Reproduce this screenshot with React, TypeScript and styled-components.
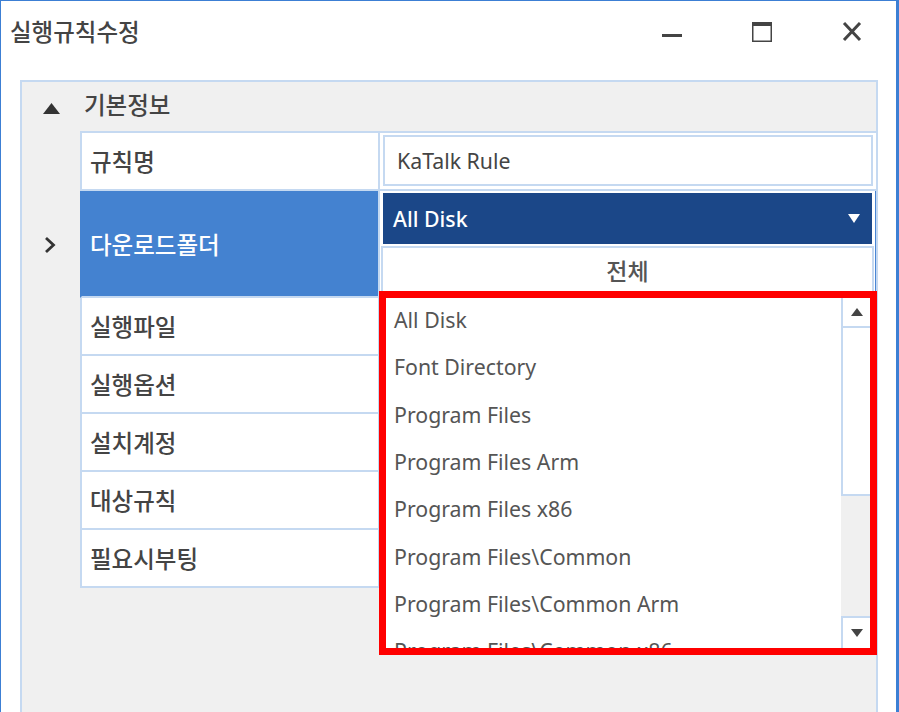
import React from "react";
import styled, { createGlobalStyle } from "styled-components";

const GlobalStyle = createGlobalStyle`
  html, body {
    margin: 0;
    padding: 0;
    background: #ffffff;
  }
  body {
    font-family: "Noto Sans", "Noto Sans CJK KR", sans-serif;
    color: #444444;
  }
`;

const LINE = "#c5d9f1";

const rows = [
  { label: "규칙명", kind: "text", value: "KaTalk Rule" },
  { label: "다운로드폴더", kind: "select", value: "All Disk" },
  { label: "실행파일" },
  { label: "실행옵션" },
  { label: "설치계정" },
  { label: "대상규칙" },
  { label: "필요시부팅" },
];

const folders = [
  "All Disk",
  "Font Directory",
  "Program Files",
  "Program Files Arm",
  "Program Files x86",
  "Program Files\\Common",
  "Program Files\\Common Arm",
  "Program Files\\Common x86",
];

const App: React.FC = () => {
  return (
    <>
      <GlobalStyle />
      <Window>
        <TitleBar>
          <Title>실행규칙수정</Title>
          <Controls>
            <CtrlButton>
              <svg width="20" height="20" viewBox="0 0 20 20">
                <rect x="0" y="12" width="20" height="3" fill="#444" />
              </svg>
            </CtrlButton>
            <CtrlButton>
              <svg width="20" height="20" viewBox="0 0 20 20">
                <rect x="0.75" y="0.75" width="18.5" height="18.5" fill="none" stroke="#444" strokeWidth="1.5" />
                <rect x="0" y="0" width="20" height="4" fill="#444" />
              </svg>
            </CtrlButton>
            <CtrlButton>
              <svg width="20" height="20" viewBox="0 0 20 20">
                <path d="M2 1 L18 18 M18 1 L2 18" stroke="#444" strokeWidth="3" />
              </svg>
            </CtrlButton>
          </Controls>
        </TitleBar>

        <Body>
          <Group>
            <GroupHeader>
              <svg width="17" height="12" viewBox="0 0 17 12">
                <path d="M8.5 0 L17 11 L0 11 Z" fill="#333" />
              </svg>
              <span>기본정보</span>
            </GroupHeader>

            <Table>
              {rows.map((r, i) => (
                <Row key={r.label} $h={i === 0 ? 60 : r.kind === "select" ? 107 : 58}>
                  <Gutter>
                    {r.kind === "select" && (
                      <svg width="12" height="18" viewBox="0 0 12 18">
                        <path d="M2 2 L9.5 9 L2 16" fill="none" stroke="#333" strokeWidth="2.8" />
                      </svg>
                    )}
                  </Gutter>
                  <Label $first={i === 0} $active={r.kind === "select"}>
                    {r.label}
                  </Label>
                  <Value $first={i === 0} $active={r.kind === "select"}>
                    {r.kind === "text" && <TextBox>{r.value}</TextBox>}
                    {r.kind === "select" && (
                      <Select>
                        <SelectHead>
                          <span>{r.value}</span>
                          <svg width="12" height="9" viewBox="0 0 12 9">
                            <path d="M0 0 L12 0 L6 9 Z" fill="#ffffff" />
                          </svg>
                        </SelectHead>
                        <Popup>
                          <PopupTitle>전체</PopupTitle>
                          <ListBox>
                            <Items>
                              {folders.map((f) => (
                                <Item key={f}>{f}</Item>
                              ))}
                            </Items>
                            <ScrollBar>
                              <ScrollBtn $up>
                                <svg width="12" height="8" viewBox="0 0 12 8">
                                  <path d="M6 0 L12 8 L0 8 Z" fill="#444" />
                                </svg>
                              </ScrollBtn>
                              <Thumb />
                              <Track />
                              <ScrollBtn>
                                <svg width="12" height="8" viewBox="0 0 12 8">
                                  <path d="M0 0 L12 0 L6 8 Z" fill="#444" />
                                </svg>
                              </ScrollBtn>
                            </ScrollBar>
                          </ListBox>
                        </Popup>
                      </Select>
                    )}
                  </Value>
                </Row>
              ))}
            </Table>
          </Group>
        </Body>
      </Window>
    </>
  );
};

export default App;

const Window = styled.div`
  box-sizing: border-box;
  width: 899px;
  height: 712px;
  border-top: 1px solid #3c7fd4;
  border-left: 1px solid #3c7fd4;
  border-right: 3px solid #3c7fd4;
  display: flex;
  flex-direction: column;
  overflow: hidden;
  background: #ffffff;
`;

const TitleBar = styled.div`
  height: 60px;
  flex-shrink: 0;
  display: flex;
  align-items: center;
  justify-content: space-between;
  padding-left: 9px;
`;

const Title = styled.div`
  font-size: 23.5px;
  font-weight: 500;
  color: #444;
`;

const Controls = styled.div`
  display: flex;
  gap: 40px;
  padding-right: 19px;
  padding-top: 1px;
`;

const CtrlButton = styled.div`
  width: 50px;
  height: 30px;
  display: flex;
  align-items: center;
  justify-content: center;
`;

const Body = styled.div`
  flex: 1;
  display: flex;
  padding: 19px 18px 0 19px;
`;

const Group = styled.div`
  flex: 1;
  border: 2px solid ${LINE};
  border-bottom: none;
  background: #f0f0f0;
  display: flex;
  flex-direction: column;
`;

const GroupHeader = styled.div`
  height: 49px;
  display: flex;
  align-items: center;
  gap: 24px;
  padding-left: 21px;
  font-size: 23.5px;
  font-weight: 500;
  color: #444;

  svg {
    margin-top: 4px;
  }
  span {
    margin-top: -5px;
  }
`;

const Table = styled.div`
  display: flex;
  flex-direction: column;
`;

const Row = styled.div<{ $h: number }>`
  display: grid;
  grid-template-columns: 58px 300px 1fr;
  height: ${(p) => p.$h}px;
`;

const Gutter = styled.div`
  display: flex;
  align-items: center;
  padding-left: 22px;
`;

const Label = styled.div<{ $first?: boolean; $active?: boolean }>`
  box-sizing: border-box;
  display: flex;
  align-items: center;
  padding-left: 8px;
  font-size: 23.5px;
  font-weight: 500;
  background: ${(p) => (p.$active ? "#4482d0" : "#ffffff")};
  color: ${(p) => (p.$active ? "#ffffff" : "#444")};
  border-left: 2px solid ${(p) => (p.$active ? "#4482d0" : LINE)};
  border-right: 2px solid ${LINE};
  border-bottom: 2px solid ${LINE};
  border-top: ${(p) => (p.$first ? `2px solid ${LINE}` : "none")};
`;

const Value = styled.div<{ $first?: boolean; $active?: boolean }>`
  box-sizing: border-box;
  background: #ffffff;
  padding: 2px 3px 0 3px;
  border-bottom: 2px solid ${LINE};
  border-top: ${(p) => (p.$first ? `2px solid ${LINE}` : "none")};
  border-right: ${(p) => (p.$active ? "1px solid #4a86d4" : "none")};
`;

const TextBox = styled.div`
  box-sizing: border-box;
  height: 51px;
  border: 2px solid ${LINE};
  display: flex;
  align-items: center;
  padding-left: 12px;
  font-size: 21.3px;
  color: #444;
`;

const Select = styled.div`
  position: relative;
`;

const SelectHead = styled.div`
  box-sizing: border-box;
  height: 51px;
  background: #1b4788;
  color: #ffffff;
  display: flex;
  align-items: center;
  justify-content: space-between;
  padding: 0 12px 0 10px;
  font-size: 21.3px;
  font-weight: 500;
`;

const Popup = styled.div`
  position: absolute;
  top: 53px;
  left: -2px;
  right: -2px;
  z-index: 5;
  background: #ffffff;
  border: 2px solid ${LINE};
  border-bottom: none;
  display: flex;
  flex-direction: column;
`;

const PopupTitle = styled.div`
  height: 43px;
  display: flex;
  align-items: center;
  justify-content: center;
  font-size: 23px;
  font-weight: 500;
  color: #555;
`;

const ListBox = styled.div`
  height: 364px;
  box-sizing: border-box;
  margin: 0 -5px 0 -4px;
  border: 7px solid #ff0000;
  display: flex;
  background: #ffffff;
`;

const Items = styled.div`
  flex: 1;
  overflow: hidden;
  padding-top: 0;

  & > div:first-child {
    margin-top: -2px;
  }
`;

const Item = styled.div`
  height: 47.3px;
  display: flex;
  align-items: center;
  padding-left: 8px;
  font-size: 21.3px;
  color: #555;
  white-space: nowrap;
`;

const ScrollBar = styled.div`
  width: 29px;
  display: flex;
  flex-direction: column;
  background: #f0f0f0;
`;

const ScrollBtn = styled.div<{ $up?: boolean }>`
  box-sizing: border-box;
  height: ${(p) => (p.$up ? 30 : 32)}px;
  background: #ffffff;
  border-left: 2px solid ${LINE};
  border-bottom: ${(p) => (p.$up ? `2px solid ${LINE}` : "none")};
  border-top: ${(p) => (p.$up ? "none" : `2px solid ${LINE}`)};
  display: flex;
  align-items: center;
  justify-content: center;
`;

const Thumb = styled.div`
  box-sizing: border-box;
  height: 168px;
  background: #ffffff;
  border-left: 2px solid ${LINE};
  border-bottom: 2px solid ${LINE};
`;

const Track = styled.div`
  flex: 1;
`;
